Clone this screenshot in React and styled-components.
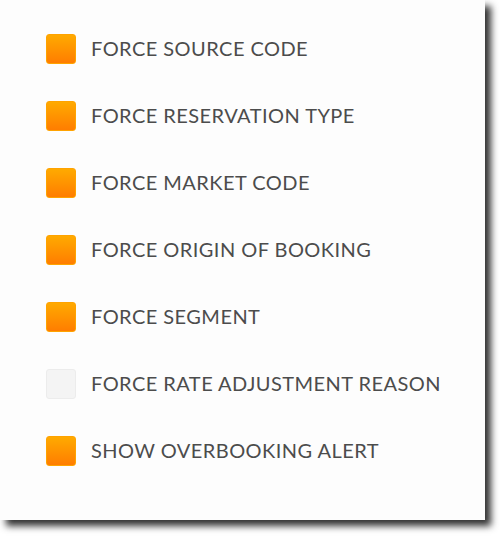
import styled, { createGlobalStyle } from "styled-components";

const GlobalStyle = createGlobalStyle`
    html, body {
        margin: 0;
        padding: 0;
        background: #ffffff;
    }
`

const Page = styled.div`
    height: 536px;
`

const Panel = styled.div`
    width: 485px;
    height: 520px;
    box-sizing: border-box;
    background: #fdfdfd;
    box-shadow: 6px 6px 7px rgba(0, 0, 0, 0.8);
    padding: 34px 0 0 46px;
    display: flex;
    flex-direction: column;
    gap: 37px;
`

const Row = styled.label`
    display: flex;
    align-items: center;
    gap: 15px;
    height: 30px;
    cursor: pointer;
`

const Box = styled.span`
    width: 30px;
    height: 30px;
    flex: none;
    box-sizing: border-box;
    border-radius: 3px;
    background: ${p => p.checked
        ? "linear-gradient(to bottom, #ffaa00, #ff7d00)"
        : "#f4f4f4"};
    border: 1px solid ${p => p.checked ? "#ffa300" : "#ececec"};
`

const Text = styled.span`
    font-family: Lato, "Open Sans", sans-serif;
    font-size: 20px;
    letter-spacing: 0.45px;
    color: #4c4c4c;
    line-height: 30px;
    white-space: nowrap;
    position: relative;
    top: -1px;
`

const items = [
    { name: "FORCE SOURCE CODE", on: true },
    { name: "FORCE RESERVATION TYPE", on: true },
    { name: "FORCE MARKET CODE", on: true },
    { name: "FORCE ORIGIN OF BOOKING", on: true },
    { name: "FORCE SEGMENT", on: true },
    { name: "FORCE RATE ADJUSTMENT REASON", on: false },
    { name: "SHOW OVERBOOKING ALERT", on: true },
];

export default function App() {
    return (
        <Page>
            <GlobalStyle />
            <Panel>
                {items.map(item =>
                    <Row key={item.name}>
                        <Box checked={item.on} />
                        <Text>{item.name}</Text>
                    </Row>
                )}
            </Panel>
        </Page>
    );
}
